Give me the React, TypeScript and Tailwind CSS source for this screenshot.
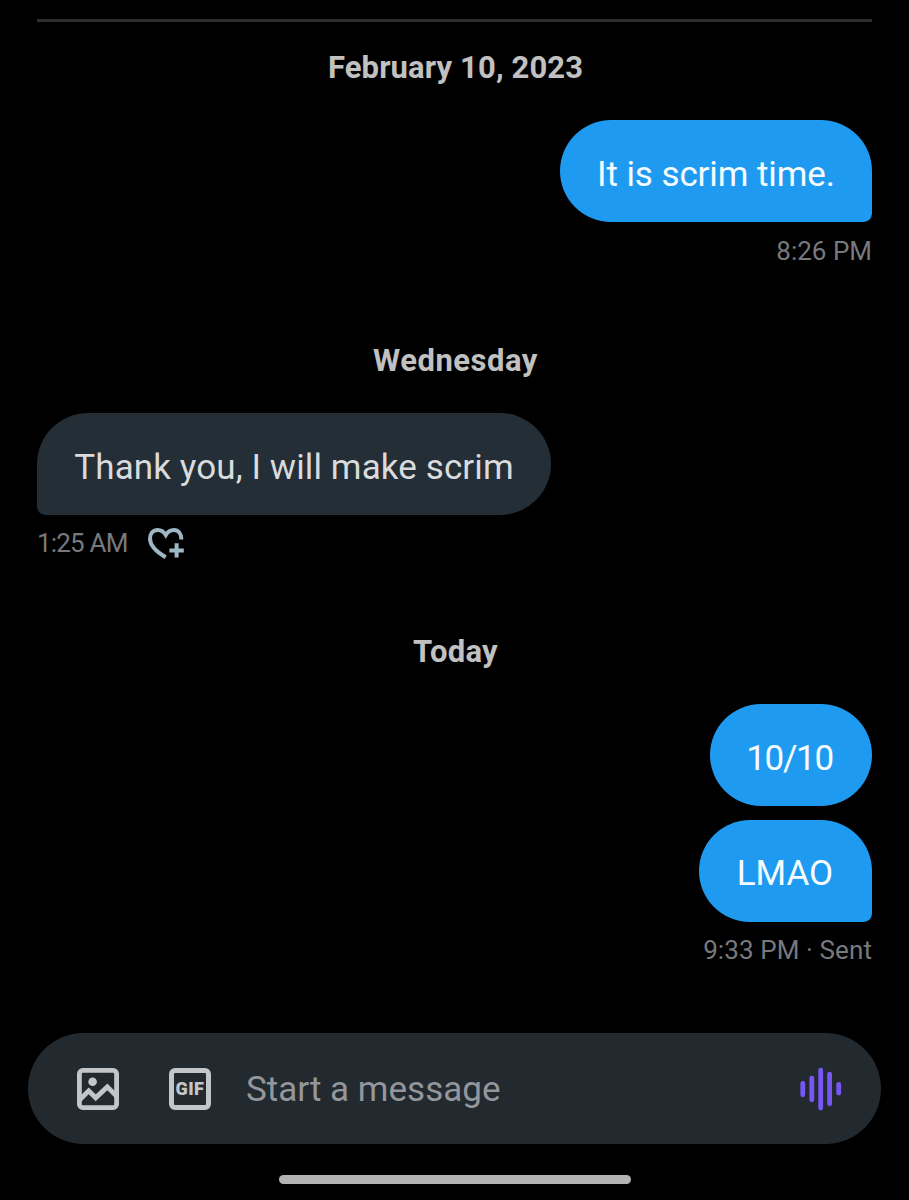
import type { ReactNode } from 'react'
import clsx from 'clsx'

interface BubbleProps {
  side: 'in' | 'out'
  tail?: boolean
  className?: string
  children: ReactNode
}

function DateHeading({ className, children }: { className?: string; children: ReactNode }) {
  return (
    <h2 className={clsx('h-9 pl-[2px] text-center text-[31px] leading-9 font-bold text-[#c1c1c1]', className)}>
      <span>{children}</span>
    </h2>
  )
}

function Bubble({ side, tail = false, className, children }: BubbleProps) {
  return (
    <div
      className={clsx(
        'flex h-[102px] items-center justify-center pt-[7px] text-[35px] leading-10 whitespace-nowrap',
        side === 'out' ? 'self-end bg-[#1e9bf1] text-[#f5fbff]' : 'self-start bg-[#242e36] text-[#d9dbdd]',
        !tail && 'rounded-[51px]',
        tail && side === 'out' && 'rounded-[54px_54px_9px_54px]',
        tail && side === 'in' && 'rounded-[54px_54px_54px_9px]',
        className,
      )}
    >
      <span>{children}</span>
    </div>
  )
}

function HeartPlusIcon() {
  return (
    <svg className="mt-[2px]" width="36" height="32" viewBox="0 0 36 32" fill="none" stroke="#9fb6c3" strokeWidth="4">
      <path d="M17.7 29.2C8.2 23.6 2 17.4 2 10.7 2 5.6 5.2 2 9.7 2c3.5 0 6.2 1.7 8.1 5 1.9-3.3 4.6-5 8.1-5 4.6 0 7.5 3.8 7.5 9.5" />
      <path d="M28.6 15.2v14.4M21.4 22.4h14.4" />
    </svg>
  )
}

function ImageIcon() {
  return (
    <svg width="42" height="42" viewBox="0 0 42 42" fill="none" stroke="#c3c6c8" strokeWidth="4.8">
      <rect x="2.4" y="2.4" width="37.2" height="37.2" rx="3.4" />
      <path d="M2.5 32 11.7 22.9l7 6.9L30.3 18.9l9.4 9.3" />
      <circle cx="15.6" cy="13.7" r="4.3" fill="#c3c6c8" stroke="none" />
    </svg>
  )
}

function GifIcon() {
  return (
    <div className="flex size-[42px] items-center justify-center rounded-md border-[5px] border-[#c3c6c8] text-[18px] leading-none font-black tracking-[0.4px] text-[#c3c6c8]">
      <span>GIF</span>
    </div>
  )
}

function VoiceIcon() {
  return (
    <svg width="42" height="44" viewBox="0 0 42 44" stroke="#7856f6" strokeWidth="4.8" strokeLinecap="round">
      <path d="M2.8 16.4v11.4M11.8 11.2v21.6M20.7 3.2v37.8M29.6 7.2v29.6M38.7 17.4v8.6" />
    </svg>
  )
}

export default function App() {
  return (
    <div className="flex h-[1200px] w-[909px] flex-col overflow-hidden bg-black font-['Roboto',sans-serif]">
      <main className="flex h-[1033px] flex-col px-[37px] pt-[19px]">
        <div className="h-[3px] shrink-0 bg-[#2e2e33]" />

        <DateHeading className="mt-[28px] tracking-[0.12px]">February 10, 2023</DateHeading>
        <Bubble side="out" tail className="mt-[34px] w-[312px] tracking-[-0.1px]">
          It is scrim time.
        </Bubble>
        <div className="mt-[11px] h-9 text-right text-[26px] leading-9 text-[#77797f]">
          <span>8:26 PM</span>
        </div>

        <DateHeading className="mt-[74px] tracking-[0.5px]">Wednesday</DateHeading>
        <Bubble side="in" tail className="mt-[34px] w-[514px] tracking-[0.1px]">
          Thank you, I will make scrim
        </Bubble>
        <div className="mt-[10px] flex h-9 items-center gap-5 text-[26px] leading-9 text-[#77797f]">
          <span className="tracking-[-0.8px]">1:25 AM</span>
          <HeartPlusIcon />
        </div>

        <DateHeading className="mt-[73px] tracking-[0.3px]">Today</DateHeading>
        <Bubble side="out" className="mt-[34px] w-[162px] pr-[3px] tracking-[-1.3px]">
          10/10
        </Bubble>
        <Bubble side="out" tail className="mt-[14px] w-[173px] pr-[1px] pb-[2px]">
          LMAO
        </Bubble>
        <div className="mt-[10px] h-9 text-right text-[26px] leading-9 text-[#77797f]">
          <span className="tracking-[0.1px]">9:33 PM · Sent</span>
        </div>
      </main>

      {/* Message composer */}
      <footer className="flex flex-col items-center">
        <div className="flex h-[111px] w-[853px] items-center rounded-full bg-[#22292f] pr-[39px] pl-[49px]">
          <ImageIcon />
          <div className="ml-[50px]">
            <GifIcon />
          </div>
          <span className="ml-[35px] flex-1 pt-[3px] text-[35px] leading-10 text-[#93979b]">Start a message</span>
          <VoiceIcon />
        </div>
        <div className="mt-[31px] h-[9px] w-[352px] rounded-full bg-[#b3b3b3]" />
      </footer>
    </div>
  )
}
